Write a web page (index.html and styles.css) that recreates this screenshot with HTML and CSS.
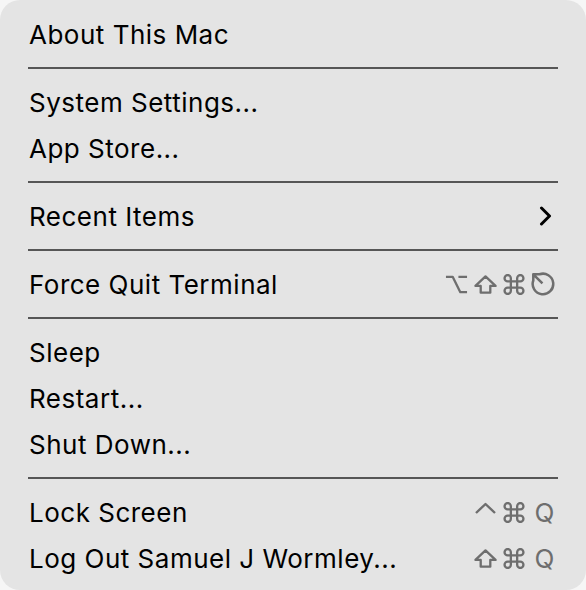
FILE: index.html
```html
<!DOCTYPE html>
<html lang="en">
<head>
    <meta charset="UTF-8">
    <meta name="viewport" content="width=device-width, initial-scale=1.0">
    <title>Apple Menu</title>
    <link rel="stylesheet" href="styles.css">
</head>
<body>
    <div class="menu">
        <div class="item"><span>About This Mac</span></div>
        <div class="sep"></div>

        <div class="item"><span>System Settings...</span></div>
        <div class="item"><span>App Store...</span></div>
        <div class="sep"></div>

        <div class="item">
            <span>Recent Items</span>
            <svg class="chevron" viewBox="0 0 13 20"><path d="M2.5 2 L10.5 10 L2.5 18"/></svg>
        </div>
        <div class="sep"></div>

        <div class="item">
            <span>Force Quit Terminal</span>
            <span class="keys">
                <svg class="key" viewBox="0 0 24 20"><path d="M1 2 H8 L16 18 H23 M14 2 H23"/></svg>
                <svg class="key" viewBox="0 0 24 20"><path d="M12 1.5 L22.5 11.5 H17 V18.5 H7 V11.5 H1.5 Z"/></svg>
                <svg class="key cmd" viewBox="2 2 20 20"><path d="M15 6v12a3 3 0 1 0 3-3H6a3 3 0 1 0 3 3V6a3 3 0 1 0-3 3h12a3 3 0 1 0-3-3"/></svg>
                <svg class="key esc" viewBox="1.5 1.5 21 21"><path d="M3.5 8.9 A9 9 0 1 0 8.9 3.5 M3.5 3.5 L11.5 11.5 M3.5 9.5 V3.5 H9.5"/></svg>
            </span>
        </div>
        <div class="sep"></div>

        <div class="item"><span>Sleep</span></div>
        <div class="item"><span>Restart...</span></div>
        <div class="item"><span>Shut Down...</span></div>
        <div class="sep"></div>

        <div class="item">
            <span>Lock Screen</span>
            <span class="keys">
                <svg class="key caret" viewBox="0 0 22 12"><path d="M1.5 11 L11 2 L20.5 11"/></svg>
                <svg class="key cmd" viewBox="2 2 20 20"><path d="M15 6v12a3 3 0 1 0 3-3H6a3 3 0 1 0 3 3V6a3 3 0 1 0-3 3h12a3 3 0 1 0-3-3"/></svg>
                <span class="letter">Q</span>
            </span>
        </div>
        <div class="item">
            <span>Log Out Samuel J Wormley...</span>
            <span class="keys">
                <svg class="key" viewBox="0 0 24 20"><path d="M12 1.5 L22.5 11.5 H17 V18.5 H7 V11.5 H1.5 Z"/></svg>
                <svg class="key cmd" viewBox="2 2 20 20"><path d="M15 6v12a3 3 0 1 0 3-3H6a3 3 0 1 0 3 3V6a3 3 0 1 0-3 3h12a3 3 0 1 0-3-3"/></svg>
                <span class="letter">Q</span>
            </span>
        </div>
    </div>
</body>
</html>
```

FILE: styles.css
```css
* {
    padding: 0;
    margin: 0;
    box-sizing: border-box;
    font-family: Inter, "Noto Sans", sans-serif;
}
body {
    width: 586px;
    height: 590px;
    background: #f6f6f6;
}
.menu {
    width: 586px;
    height: 590px;
    padding-top: 11px;
    border-radius: 20px;
    background: #e4e4e4;
}
.item {
    height: 46px;
    padding: 0 31px 0 29px;
    display: flex;
    align-items: center;
    justify-content: space-between;
    font-size: 26px;
    letter-spacing: 0.5px;
    color: #000;
}
.sep {
    height: 2px;
    margin: 10px 28px 10px 28px;
    background: #565656;
}
.chevron {
    width: 13px;
    height: 20px;
    margin-right: 3px;
    fill: none;
    stroke: #000;
    stroke-width: 3;
    stroke-linecap: round;
    stroke-linejoin: round;
}
.keys {
    display: flex;
    align-items: center;
    gap: 6px;
    color: #6e6e6e;
}
.key {
    width: 23px;
    height: 21px;
    fill: none;
    stroke: #6e6e6e;
    stroke-width: 2.4;
    stroke-linejoin: round;
}
.cmd {
    width: 22px;
    height: 21px;
    stroke-width: 2.2;
}
.esc {
    width: 24px;
    height: 24px;
    stroke-width: 2.2;
}
.caret {
    height: 12px;
    margin-bottom: 8px;
}
.letter {
    font-size: 26px;
    margin-left: 4px;
}
```
